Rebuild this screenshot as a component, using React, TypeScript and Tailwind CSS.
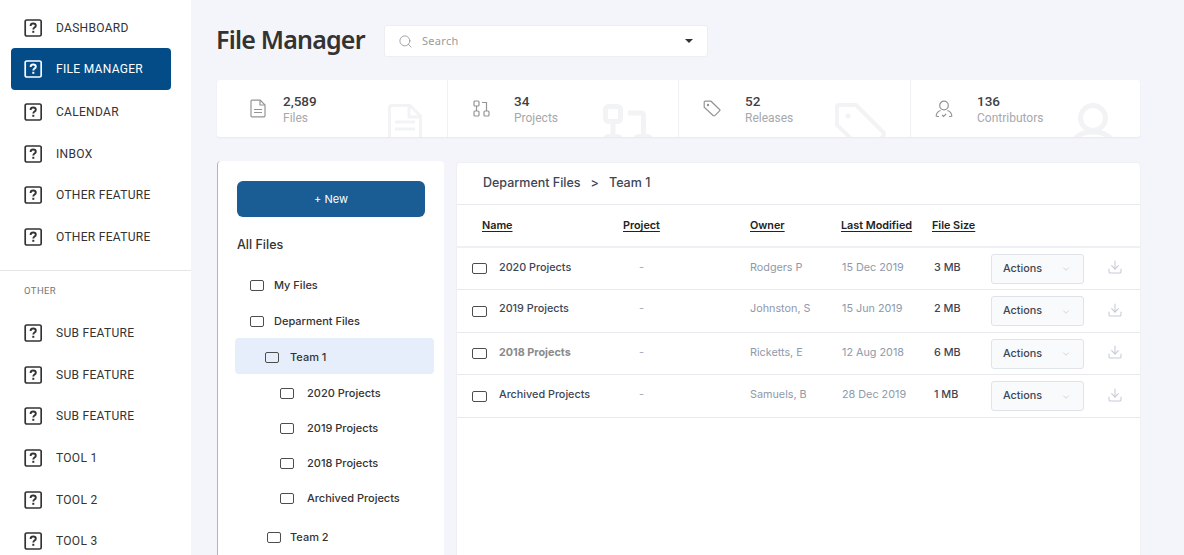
import React from "react";
import { Search, ChevronDown, Download } from "lucide-react";

function HelpBox({ active }: { active?: boolean }) {
  const c = active ? "#ffffff" : "#333333";
  return (
    <svg width="18" height="18" viewBox="0 0 18 18" className="shrink-0" fill="none">
      <rect x="1.2" y="1" width="16" height="16" rx="1.6" stroke={c} strokeWidth="1.7" />
      <path d="M6.6 6.9c0-1.5 1.1-2.4 2.6-2.4s2.6.9 2.6 2.2c0 1.9-2.5 1.9-2.5 3.8" stroke={c} strokeWidth="1.9" />
      <rect x="8.3" y="11.8" width="2" height="2" fill={c} />
    </svg>
  );
}

function NavRow({ label, active, h }: { label: string; active?: boolean; h: string }) {
  return (
    <div className={`${h} ml-[11px] mr-[20px] flex items-center pl-[13px] gap-[14px] rounded-[4px] text-[12px] tracking-[0.3px] ${active ? "bg-[#034c88] text-white" : "text-[#333]"}`}>
      <HelpBox active={active} />
      <span>{label}</span>
    </div>
  );
}

function Box({ w = 14 }: { w?: number }) {
  return <span style={{ width: w }} className="h-[11px] shrink-0 rounded-[2px] border-[1.5px] border-[#4d4d4d]" />;
}

const small = "#949494";
const pale = "#f2f3f5";

const FileSmall = (
  <svg width="18" height="19" viewBox="0 0 18 19" fill="none" stroke={small} strokeWidth="1.2">
    <path d="M2 2.2c0-.6.4-1 1-1h8.2L16 6v10.8c0 .6-.4 1-1 1H3c-.6 0-1-.4-1-1z" />
    <path d="M11 1.4V6h5M5 10.5h8M5 13.5h8" />
  </svg>
);
const FileGhost = (
  <svg width="34" height="40" viewBox="0 0 34 40" fill="none" stroke={pale} strokeWidth="3">
    <path d="M1.5 4c0-1.4 1-2.5 2.500-2.500h18L32.500 12v24c0 1.400-1 2.500-2.500 2.500H4c-1.500 0-2.500-1-2.500-2.500z" />
    <path d="M21 2v11h11" />
    <path d="M7 18h20M7 25h20" />
  </svg>
);
const ProjectsSmall = (
  <svg width="17" height="17" viewBox="0 0 17 17" fill="none" stroke={small} strokeWidth="1.2">
    <rect x="1" y="1" width="5" height="5" rx="1" />
    <rect x="1" y="11" width="5" height="5" rx="1" />
    <rect x="11" y="11" width="5" height="5" rx="1" />
    <path d="M3.500 6v5M9 2.500h4.500V11" />
  </svg>
);
const ProjectsGhost = (
  <svg width="50" height="40" viewBox="0 0 50 40" fill="none" stroke={pale} strokeWidth="5">
    <rect x="2.500" y="2.500" width="15" height="15" rx="3" />
    <rect x="2.500" y="32.500" width="15" height="15" rx="3" />
    <rect x="32.500" y="32.500" width="15" height="15" rx="3" />
    <path d="M10 17v16M25 9h13c1.500 0 2.500 1 2.500 2.500V33" />
  </svg>
);
const TagSmall = (
  <svg width="18" height="17" viewBox="0 0 18 17" fill="none" stroke={small} strokeWidth="1.2">
    <path d="M1.200 2.200c0-.6.400-1 1-1H8l8.600 8.300c.4.400.4 1 0 1.400l-4.800 4.800c-.4.400-1 .4-1.400 0L1.200 7.200z" />
    <circle cx="5" cy="5" r=".6" fill={small} />
  </svg>
);
const TagGhost = (
  <svg width="51" height="40" viewBox="0 0 51 40" fill="none" stroke={pale} strokeWidth="4">
    <path d="M2 4c0-1.200.8-2 2-2h17l27 27c1.200 1.200 1.200 3 0 4.200L33 48c-1.200 1.200-3 1.200-4.200 0L2 22z" />
    <circle cx="13" cy="13" r="2.500" fill={pale} stroke="none" />
  </svg>
);
const UserSmall = (
  <svg width="18" height="18" viewBox="0 0 18 18" fill="none" stroke={small} strokeWidth="1.2">
    <circle cx="9" cy="5.500" r="4.300" />
    <path d="M1.200 16.500c0-3 2-5.200 4.300-6M16.800 16.500c0-3-2-5.200-4.300-6M1.500 16.500h2.500M14 16.500h2.500M7 15l1.600 1.400 2.600-2.600" />
  </svg>
);
const UserGhost = (
  <svg width="44" height="34" viewBox="0 0 44 34" fill="none" stroke={pale} strokeWidth="5">
    <circle cx="22" cy="15" r="12.500" />
    <path d="M2 42c0-8 8-13 20-13s20 5 20 13" />
  </svg>
);

function Stat({ value, label, icon, ghost, ghostPos, w, first, border }: { value: string; label: string; icon: React.ReactNode; ghost: React.ReactNode; ghostPos: string; w: string; first?: boolean; border?: boolean }) {
  return (
    <div className={`relative ${w} shrink-0 h-full overflow-hidden flex items-center ${first ? "pl-[32px]" : "pl-[24px]"} ${border ? "border-r border-[#f0f1f5]" : ""}`}>
      <div className={`absolute ${ghostPos}`}>{ghost}</div>
      <div className="w-[18px] flex justify-center">{icon}</div>
      <div className={`${first ? "ml-[16px]" : "ml-[24px]"} pt-[2px]`}>
        <div className="text-[13.5px] leading-[16px] font-medium text-[#3f3f46]">{value}</div>
        <div className="text-[12px] leading-[17px] mt-[1px] text-[#a6a8ac]">{label}</div>
      </div>
    </div>
  );
}

const rows = [
  { n: "2020 Projects", o: "Rodgers P", d: "15 Dec 2019", s: "3 MB", h: "h-[42px]", t: "" },
  { n: "2019 Projects", o: "Johnston, S", d: "15 Jun 2019", s: "2 MB", h: "h-[43px]", t: "pb-[3px]" },
  { n: "2018 Projects", o: "Ricketts, E", d: "12 Aug 2018", s: "6 MB", h: "h-[42px]", t: "", dim: true },
  { n: "Archived Projects", o: "Samuels, B", d: "28 Dec 2019", s: "1 MB", h: "h-[43px]", t: "pb-[1px]" },
];

const cols = "grid grid-cols-[166px_127px_91px_91px_59px_116px_auto] items-center";

function TreeRow({ label, pl, gap, h = "h-[35px]", active, mt }: { label: string; pl: string; gap: string; h?: string; active?: boolean; mt?: string }) {
  return (
    <div className={`flex items-center ${h} ${pl} ${gap} ${mt ?? ""} ${active ? "bg-[#e6edfb] rounded-[4px]" : ""}`}>
      <Box />
      <span>{label}</span>
    </div>
  );
}

export default function App() {
  return (
    <div className="flex h-[555px] w-[1184px] overflow-hidden bg-[#f4f5fa] font-['Roboto',sans-serif]">
      <aside className="w-[191px] shrink-0 bg-white pt-[7px]">
        <NavRow label="DASHBOARD" h="h-[41px]" />
        <NavRow label="FILE MANAGER" h="h-[42px]" active />
        <NavRow label="CALENDAR" h="h-[43px]" />
        <NavRow label="INBOX" h="h-[41px]" />
        <NavRow label="OTHER FEATURE" h="h-[42px]" />
        <NavRow label="OTHER FEATURE" h="h-[42px]" />
        <div className="mt-[12px] border-t border-[#e5e5e5] h-[42px] pl-[24px] pt-[14px] text-[9.5px] leading-[12px] tracking-[0.4px] text-[#777]">OTHER</div>
        <NavRow label="SUB FEATURE" h="h-[42px]" />
        <NavRow label="SUB FEATURE" h="h-[41px]" />
        <NavRow label="SUB FEATURE" h="h-[42px]" />
        <NavRow label="TOOL 1" h="h-[42px]" />
        <NavRow label="TOOL 2" h="h-[41px]" />
        <NavRow label="TOOL 3" h="h-[42px]" />
      </aside>

      <main className="flex-1 pl-[25px] pr-[43px] min-w-0">
        <header className="h-[80px] flex items-start">
          <h1 className="mt-[19px] whitespace-nowrap font-['Noto_Sans',sans-serif] text-[25px] leading-[40px] font-semibold text-[#333] tracking-[-0.8px] w-[168px]">File Manager</h1>
          <div className="mt-[25px] w-[324px] h-[32px] bg-white border border-[#eceef3] rounded-[3px] flex items-center pl-[13px] pr-[14px]">
            <Search size={15} strokeWidth={1.2} color="#8a8a8a" />
            <span className="ml-[9px] text-[11px] tracking-[0.3px] text-[#9a9a9a] font-['Noto_Sans',sans-serif]">Search</span>
            <span className="ml-auto w-0 h-0 border-x-[4px] border-x-transparent border-t-[4px] border-t-[#333]" />
          </div>
        </header>

        <section className="ml-[1px] h-[57px] w-[923px] bg-white rounded-[3px] flex overflow-hidden shadow-[0_1px_2px_rgba(0,0,0,0.05)]">
          <Stat w="w-[231px]" first value="2,589" label="Files" border icon={FileSmall} ghost={FileGhost} ghostPos="left-[171px] top-[24px]" />
          <Stat w="w-[231px]" value="34" label="Projects" border icon={ProjectsSmall} ghost={ProjectsGhost} ghostPos="left-[155px] top-[24px]" />
          <Stat w="w-[232px]" value="52" label="Releases" border icon={TagSmall} ghost={TagGhost} ghostPos="left-[156px] top-[23px]" />
          <Stat w="w-[229px]" value="136" label="Contributors" icon={UserSmall} ghost={UserGhost} ghostPos="left-[160px] top-[23px]" />
        </section>

        <div className="flex mt-[24px] items-start font-['Inter',sans-serif]">
          <section className="ml-[1px] w-[227px] h-[400px] bg-white rounded-[4px] border-l border-l-[#b5b5b5] pt-[20px]">
            <button className="block ml-[19px] w-[188px] h-[36px] bg-[#1a5c94] rounded-[6px] text-white text-[11px]">+ New</button>
            <div className="ml-[19px] mt-[18px] text-[12.5px] leading-[20px] font-medium text-[#333]">All Files</div>
            <div className="mt-[12px] text-[11px] font-medium text-[#333] pr-[10px] pl-[17px]">
              <TreeRow label="My Files" pl="pl-[15px]" gap="gap-[10px]" h="h-[36px]" />
              <TreeRow label="Deparment Files" pl="pl-[15px]" gap="gap-[10px]" h="h-[35px] pt-[2px]" />
              <TreeRow label="Team 1" pl="pl-[30px]" gap="gap-[11px]" h="h-[36px] pt-[2px]" active />
              <div className="mt-[2px]">
                {["2020 Projects", "2019 Projects", "2018 Projects", "Archived Projects"].map((l) => (
                  <TreeRow key={l} label={l} pl="pl-[45px]" gap="gap-[13px]" />
                ))}
              </div>
              <TreeRow label="Team 2" pl="pl-[32px]" gap="gap-[9px]" h="h-[36px]" mt="mt-[3px]" />
            </div>
          </section>

          <section className="ml-[12px] mt-[1px] w-[685px] h-[400px] bg-white rounded-[4px] border border-[#eef0f4] text-[10.8px] font-medium">
            <div className="h-[42px] flex items-center pl-[26px] text-[12.5px] text-[#3e4654] border-b border-[#e7e9ee]">
              <span>Deparment Files</span>
              <span className="mx-[10px]">&gt;</span>
              <span>Team 1</span>
            </div>
            <div className={`${cols} h-[43px] pt-[2px] border-b-2 border-[#eef0f3] text-[#222] font-semibold underline underline-offset-2`}>
              <span className="pl-[25px]">Name</span>
              <span>Project</span>
              <span>Owner</span>
              <span>Last Modified</span>
              <span>File Size</span>
            </div>
            {rows.map((r) => (
              <div key={r.n} className={`${cols} ${r.h} border-b border-[#e7e9ee]`}>
                <div className="flex items-center pl-[15px] gap-[12px]">
                  <Box w={15} />
                  <span className={`${r.t} ${r.dim ? "text-[#8a8a8a] font-bold" : "text-[#3e4654]"}`}>{r.n}</span>
                </div>
                <span className={`pl-[16px] text-[#a8b0bf] ${r.t}`}>-</span>
                <span className={`font-normal text-[#8f99ab] ${r.t}`}>{r.o}</span>
                <span className={`pl-[1px] font-normal text-[#8f99ab] ${r.t}`}>{r.d}</span>
                <span className={`pl-[2px] text-[#3e4654] ${r.t}`}>{r.s}</span>
                <div className="flex items-center justify-between w-[93px] h-[30px] pl-[11px] pr-[12px] pt-[1px] rounded-[3px] border border-[#dfe3ea] bg-[#f9fafb] text-[#3e4654]">
                  <span>Actions</span>
                  <ChevronDown size={10} strokeWidth={1.2} color="#a8b0bf" />
                </div>
                <div className="pb-[3px]"><Download size={16} strokeWidth={1.6} color="#c5ccd8" /></div>
              </div>
            ))}
          </section>
        </div>
      </main>
    </div>
  );
}
